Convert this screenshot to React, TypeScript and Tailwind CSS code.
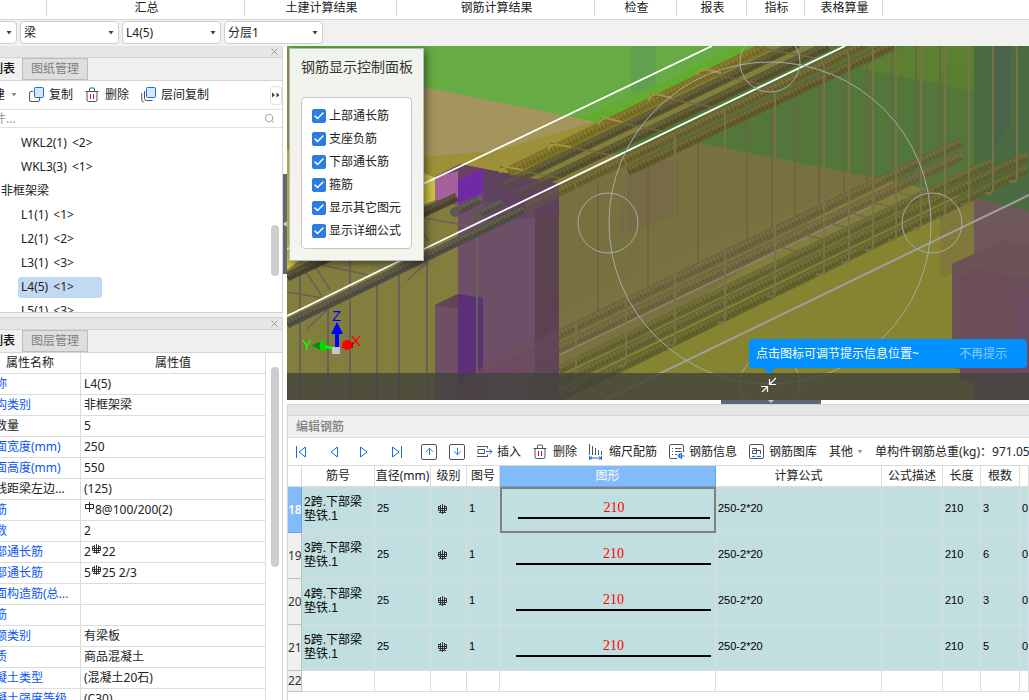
import React, { useState } from "react";
import { ArrowDown, ArrowUp, Check, Search, X } from "lucide-react";

const ribbon = [
  { label: "", width: "w-[47px]" },
  { label: "汇总", width: "w-[198px]" },
  { label: "土建计算结果", width: "w-[152px]" },
  { label: "钢筋计算结果", width: "w-[198px]" },
  { label: "检查", width: "w-[82px]" },
  { label: "报表", width: "w-[70px]" },
  { label: "指标", width: "w-[58px]" },
  { label: "表格算量", width: "w-[78px]" },
];

const members = [
  { name: "WKL2(1)", count: "<2>" },
  { name: "WKL3(3)", count: "<1>" },
  { name: "非框架梁", group: true },
  { name: "L1(1)", count: "<1>" },
  { name: "L2(1)", count: "<2>" },
  { name: "L3(1)", count: "<3>" },
  { name: "L4(5)", count: "<1>" },
  { name: "L5(1)", count: "<3>" },
];

const properties = [
  { name: "名称", value: "L4(5)", blue: true },
  { name: "结构类别", value: "非框架梁", blue: true },
  { name: "跨数量", value: "5" },
  { name: "截面宽度(mm)", value: "250", blue: true },
  { name: "截面高度(mm)", value: "550", blue: true },
  { name: "轴线距梁左边...", value: "(125)" },
  { name: "箍筋", value: <><Grade level={1} />8@100/200(2)</>, blue: true },
  { name: "肢数", value: "2", blue: true },
  { name: "上部通长筋", value: <>2<Grade level={3} />22</>, blue: true },
  { name: "下部通长筋", value: <>5<Grade level={3} />25 2/3</>, blue: true },
  { name: "侧面构造筋(总...", value: "", blue: true },
  { name: "拉筋", value: "", blue: true },
  { name: "定额类别", value: "有梁板", blue: true },
  { name: "材质", value: "商品混凝土", blue: true },
  { name: "混凝土类型", value: "(混凝土20石)", blue: true },
  { name: "混凝土强度等级", value: "(C30)", blue: true },
];

const rebars = [
  { id: 18, span: "2跨", count: 3 },
  { id: 19, span: "3跨", count: 6 },
  { id: 20, span: "4跨", count: 3 },
  { id: 21, span: "5跨", count: 5 },
];

const layers = ["上部通长筋", "支座负筋", "下部通长筋", "箍筋", "显示其它图元", "显示详细公式"];

// Steel grade mark: a box on a stem, grade 3 has extra bars
function Grade({ level }: { level: number }) {
  return (
    <svg width="11" height="11" viewBox="0 0 11 11" fill="none" stroke="#222" className="inline-block align-[1px]">
      {level === 1 ? (
        <path d="M1.500 2.500h8v4h-8zM5.500 0v10" />
      ) : (
        <path d="M3.500 2.500h-2v4h8v-4h-2M5.500 0v10M3.500 1v7M7.500 1v7M1 4.500h9M2 8.500h7" strokeWidth=".9" />
      )}
    </svg>
  );
}

const Caret = ({ className = "" }: { className?: string }) => (
  <svg width="6" height="4" viewBox="0 0 6 4" className={className}>
    <path d="M.5 0h5L3 3.500z" fill="currentColor" />
  </svg>
);

const CopyIcon = ({ triple = false }: { triple?: boolean }) => (
  <svg width="16" height="16" viewBox="0 0 16 16" fill="none">
    {triple ? (
      <path d="M3.500 4v7.500a2 2 0 0 0 2 2h6M.8 6v7a2 2 0 0 0 2 2" stroke="#4a5266" />
    ) : (
      <path d="M4 4.500H2A1.500 1.500 0 0 0 .5 6v7A1.500 1.500 0 0 0 2 14.500h7a1.500 1.500 0 0 0 1.500-1.500v-2" stroke="#4a5266" />
    )}
    <rect x="5.500" y=".5" width="9" height="10" rx="1" fill="#d6e6ff" stroke="#1a6be0" />
  </svg>
);

const TrashIcon = () => (
  <svg width="16" height="16" viewBox="0 0 16 16" fill="none">
    <path d="M.5 4.500h13M4.500 4V2A1 1 0 0 1 5.500 1h3a1 1 0 0 1 1 1v2M2 4.500V13a1.500 1.500 0 0 0 1.500 1.500h7A1.500 1.500 0 0 0 12 13V4.500" stroke="#4a5266" />
    <path d="M5.500 7v5M8.500 7v5" stroke="#e01020" />
  </svg>
);

const InsertIcon = () => (
  <svg width="16" height="16" viewBox="0 0 16 16" fill="none">
    <path d="M0 2.500h10.500v2M0 12.500h10.500v-2M1 5.500h6.500v4H1z" stroke="#4a5266" />
    <path d="M9 7.500h6M12.500 5l2.500 2.500-2.500 2.500" stroke="#1a6be0" />
  </svg>
);

const ScaleIcon = () => (
  <svg width="16" height="16" viewBox="0 0 16 16" fill="none">
    <path d="M.5 0v11M3.500 2v9M6.500 4v7M9.500 6v5M12.500 7v4" stroke="#4a5266" />
    <path d="M.5 12v4M12.500 12v4M1 14h11M3 12.500L1 14l2 1.500M10 12.500l2 1.500-2 1.500" stroke="#1a6be0" />
  </svg>
);

const InfoIcon = () => (
  <svg width="16" height="16" viewBox="0 0 16 16" fill="none">
    <path d="M8 14.500H2A1.500 1.500 0 0 1 .5 13V2A1.500 1.500 0 0 1 2 .5h11A1.500 1.500 0 0 1 14.500 2v6M3 4.500h1M6 4.500h6.500M3 7.500h1M6 7.500h6.500M3 10.500h1M6 10.500h2" stroke="#4a5266" />
    <path d="M9 12h6.500M12.500 9v6M9 12l2.500-2.500M9 12l2.500 2" stroke="#1a6be0" strokeWidth="1.200" />
  </svg>
);

const LibraryIcon = () => (
  <svg width="16" height="16" viewBox="0 0 16 16" fill="none">
    <rect x=".5" y=".5" width="14" height="14" rx="1.500" stroke="#4a5266" />
    <path d="M3 4.500h4.500v5H3.500v-3H7M8 6.500h3.500v3.500" stroke="#4a5266" />
    <path d="M3 12.500h3.500M8 12.500h4" stroke="#1a6be0" />
  </svg>
);

const StepIcon = ({ back = false, end = false }) => (
  <svg width="16" height="16" viewBox="0 0 16 16" fill="none" stroke="#1a6be0">
    <path d={back ? "M12.500 3v10L6 8z" : "M3.500 3v10L10 8z"} />
    {end && <path d={back ? "M3.500 2v12" : "M12.500 2v12"} />}
  </svg>
);

function Combo({ value }: { value: string }) {
  return (
    <div className="relative w-[99px] shrink-0">
      <select
        aria-label={value}
        className="h-[23px] w-full appearance-none rounded border border-[#cfcfcf] bg-white pl-[3px] text-xs text-[#222]">
        <option>{value}</option>
      </select>
      <Caret className="pointer-events-none absolute top-[10px] right-[5px] text-[#444]" />
    </div>
  );
}

function PanelTop({ active, other }: { active: string; other: string }) {
  return (
    <>
      <div className="flex h-3 items-center justify-end border-b border-[#d4d4d4] bg-[#e6e6e6] pr-0.5">
        <button aria-label="关闭">
          <X size={11} className="text-[#999]" strokeWidth={2} />
        </button>
      </div>
      <div className="flex h-[23px] border-b border-[#d4d4d4] bg-[#f0f0f0] pl-1.5 text-xs">
        <button className="w-16 pl-0.5 font-medium text-[#111]">{active}</button>
        <button className="w-[66px] border border-[#bcbcc0] bg-[#dedede] text-[#808080]">{other}</button>
      </div>
    </>
  );
}

function ToolButton({ icon, label }: { icon: React.ReactNode; label: string }) {
  return (
    <button className="flex shrink-0 items-center gap-1">
      {icon}
      {label}
    </button>
  );
}

function MemberPanel() {
  const [selected, setSelected] = useState("L4(5)");

  return (
    <section className="border-r border-b border-[#d4d4d4] bg-white">
      <PanelTop active="构件列表" other="图纸管理" />
      <div className="flex h-[29px] items-center gap-3 border-b border-[#e0e0e0] pl-[29px] text-xs text-[#222]">
        <button className="flex shrink-0 items-center gap-1.5">
          新建
          <Caret className="text-[#888]" />
        </button>
        <ToolButton icon={<CopyIcon />} label="复制" />
        <ToolButton icon={<TrashIcon />} label="删除" />
        <ToolButton icon={<CopyIcon triple />} label="层间复制" />
        <button aria-label="更多" className="ml-auto flex h-[19px] w-3 items-center justify-center rounded border border-[#dedede]">
          <svg width="8" height="6" viewBox="0 0 8 6">
            <path d="M0 .5v5l3-2.500zM4.500 .5v5l3-2.500z" fill="#444" />
          </svg>
        </button>
      </div>
      <label className="flex h-[18px] items-center border-b border-[#e0e0e0] pr-[7px] pl-1.5">
        <input aria-label="搜索构件" placeholder="搜索构件..." className="min-w-0 flex-1 text-xs outline-none placeholder:text-[#999]" />
        <Search size={11} className="text-[#999]" />
      </label>
      <div className="relative h-[184px] overflow-hidden pt-[3px] text-xs text-[#222]">
        {members.map((item) =>
          item.group ? (
            <div key={item.name} className="flex h-6 items-center pl-[49px]">
              {item.name}
            </div>
          ) : (
            <div key={item.name} className="flex h-6 items-center pl-[66px]">
              <button
                onClick={() => setSelected(item.name)}
                className={`h-[21px] w-[84px] rounded-[3px] pl-[3px] text-left leading-5 ${
                  item.name === selected ? "bg-[#c2d9f2]" : ""
                }`}>
                {item.name} <span className="ml-0.5">{item.count}</span>
              </button>
            </div>
          )
        )}
        <div className="absolute top-[97px] right-[3px] h-[51px] w-2 rounded-full bg-[#cdcdcd]" />
      </div>
    </section>
  );
}

function PropertyPanel() {
  return (
    <section className="mt-1 flex min-h-0 flex-1 flex-col border-t border-r border-[#d4d4d4] bg-white">
      <PanelTop active="属性列表" other="图层管理" />
      <div className="relative min-h-0 flex-1 overflow-hidden pl-7">
        <table className="w-[286px] table-fixed border-separate border-spacing-0 text-xs text-[#222]">
          <thead>
            <tr className="h-[21px]">
              <th className="w-[101px] border-r border-b border-[#dcdcdc] p-0 font-normal">属性名称</th>
              <th className="border-r border-b border-[#dcdcdc] p-0 font-normal">属性值</th>
            </tr>
          </thead>
          <tbody>
            {properties.map((p) => (
              <tr key={p.name} className="h-[21px]">
                <td
                  className={`truncate border-r border-b border-[#dcdcdc] p-0 pl-[3px] ${
                    p.blue ? "text-[#0d55f5]" : ""
                  }`}>
                  {p.name}
                </td>
                <td className="border-r border-b border-[#dcdcdc] p-0 pl-[3px] whitespace-nowrap">{p.value}</td>
              </tr>
            ))}
          </tbody>
        </table>
        <div className="absolute top-[14px] right-[3px] h-[200px] w-2 rounded-full bg-[#cdcdcd]" />
      </div>
    </section>
  );
}

// [x1, y1, x2, y2, colour, width]
const upperBars: [number, number, number, number, string, number][] = [
  [508, 172, 767, 46, "#7d7024", 10],
  [500, 187, 798, 44, "#57522f", 9],
  [515, 195, 828, 46, "#55502d", 9],
  [525, 208, 866, 44, "#69622f", 10],
  [628, 171, 895, 44, "#625c2c", 10],
];

const lowerBars: [number, number, number, number, string, number][] = [
  [485, 370, 962, 142, "#6a5f3b", 10],
  [515, 370, 962, 156, "#6b603c", 10],
  [559, 370, 994, 161, "#62622f", 9],
  [559, 383, 1027, 156, "#62612e", 10],
  [559, 397, 1027, 169, "#5f5f2c", 10],
];

const frontBars: [number, number, number, number, string, number][] = [
  [287, 277, 457, 197, "#4a4431", 9],
  [287, 324, 523, 210, "#504d44", 9],
  [455, 212, 480, 200, "#524d4b", 9],
  [477, 215, 502, 203, "#524d4b", 9],
];

// [x, top, bottom]
const frontStirrups = [
  [576, 184, 390], [626, 160, 366], [675, 135, 345], [725, 110, 322], [775, 92, 296],
  [824, 64, 274], [849, 54, 262], [873, 46, 250], [896, 46, 240], [921, 46, 228],
  [945, 46, 217], [969, 46, 204], [993, 46, 193], [1017, 46, 181],
];
const backStirrups = [
  [598, 180, 312], [648, 160, 290], [698, 143, 263], [747, 118, 240], [772, 108, 228],
  [795, 97, 216], [819, 86, 205], [844, 72, 192], [867, 60, 180], [892, 46, 169],
  [916, 46, 157], [940, 46, 147],
];
const nearStirrups = [
  [300, 273, 400], [328, 302, 400], [350, 261, 400], [377, 278, 400], [399, 272, 400],
  [427, 246, 400], [477, 228, 400],
];

function Bars({ bars, opacity = 1 }: { bars: typeof upperBars; opacity?: number }) {
  return (
    <g opacity={opacity}>
      {bars.map(([x1, y1, x2, y2, color, width]) => (
        <g key={`${x1}-${y1}`}>
          <path d={`M${x1} ${y1}L${x2} ${y2}`} stroke={color} strokeWidth={width} />
          <path d={`M${x1} ${y1 - 2}L${x2} ${y2 - 2}`} stroke="#c8c080" strokeOpacity=".15" strokeWidth="4" />
          <path d={`M${x1} ${y1}L${x2} ${y2}`} stroke="#1c1a08" strokeOpacity=".2" strokeWidth={width - 4} strokeDasharray="1.200 2.800" />
        </g>
      ))}
    </g>
  );
}

function Scene() {
  return (
    <svg viewBox="287 46 742 354" preserveAspectRatio="xMinYMin slice" className="absolute inset-0 h-full w-full" fill="none">
      <rect x="287" y="46" width="742" height="354" fill="#817e3e" />
      <path d="M287 46H768L590 130L424 87L287 60z" fill="#66ab44" />
      <path d="M631 46h25v40l-25 14z" fill="#61a04f" />
      <path d="M550 132L668 80L732 46H770L590 132z" fill="#62ad2f" />
      <path d="M287 58L424 87L596 122L530 153L424 157L287 162z" fill="#a4955e" />
      <path d="M287 160L424 157L500 150L600 120L520 176L436 178L424 173L287 170z" fill="#9c9139" />
      <path d="M287 150H300V260L287 270zM424 173L436 178V200L420 206z" fill="#cbc241" />

      {/* slabs behind the beam */}
      <path d="M600 150L815 46H1029V212L974 199L875 178L697 143L640 160z" fill="#53773a" />
      <path d="M860 68L905 46H974V91z" fill="#5c8030" />
      <path d="M940 68l16-4 18 5v22l-34-7z" fill="#587f2e" />
      <path d="M974 46H1029V212L974 199z" fill="#4b6c42" />
      <path d="M992 46h18v80l-18 24z" fill="#4b6449" />
      <path d="M559 184L640 152L698 143L875 178L657 284L559 330z" fill="#77713f" />
      <path d="M626 170l30-10h23v54l-60 22z" fill="#776a46" />
      <path d="M559 400L640 350L940 205L974 199L1029 212V400z" fill="#858430" />
      <path d="M559 310L720 235L875 178L640 340L559 370z" fill="#7a7240" />

      {/* far right columns */}
      <path d="M940 210L974 199V264L940 279z" fill="#81793a" />
      <path d="M974 199L1029 211V400H974z" fill="#70585a" />
      <path d="M952 264L1003 240L1029 245V376L952 368z" fill="#6d5357" />
      <path d="M960 276L975 269L1029 279V400L960 379z" fill="#6a4d59" />
      <path d="M1014 296l15-2v80l-15-3z" fill="#6d4b60" />

      {/* column at the support */}
      <path d="M435 177L460 164L559 184V400H458V205L435 201z" fill="#6e4f68" />
      <path d="M435 177L460 164L559 184V200L458 178z" fill="#6b4162" />
      <path d="M435 177L458 171V203L435 200z" fill="#a5619a" />
      <path d="M458 180L483 168V193L458 204z" fill="#7229a6" />
      <path d="M483 169L559 184V215L483 200z" fill="#5f4160" />
      <path d="M535 200L559 184V400H535z" fill="#5c4350" />
      <path d="M435 305L458 294V400H435z" fill="#704f64" />
      <path d="M435 305L458 294V309z" fill="#5f4652" />
      <path d="M458 294L483 298V400H458z" fill="#5c3079" />

      <g stroke="#6c6242" strokeWidth="2" strokeOpacity=".75">
        {backStirrups.map(([x, top, bottom]) => (
          <path key={x} d={`M${x} ${top}V${bottom}`} />
        ))}
      </g>
      <Bars bars={lowerBars.slice(0, 2)} opacity={0.8} />
      <path d="M559 355L870 207" stroke="#8b8278" strokeWidth="1.500" />
      <Bars bars={lowerBars.slice(2)} opacity={0.9} />
      <path d="M483 366L559 329V400H440z" fill="#6c4868" fillOpacity=".75" />
      <path d="M535 300L559 290V400H535z" fill="#5c4350" fillOpacity=".6" />
      <Bars bars={upperBars} />
      <path d="M483 169L559 184V215L483 222z" fill="#5f4160" fillOpacity=".6" />
      <g stroke="#7a7247" strokeWidth="2">
        {frontStirrups.map(([x, top, bottom]) => (
          <path key={x} d={`M${x - 3} ${top - 2}Q${x} ${top} ${x} ${top + 5}V${bottom - 4}Q${x} ${bottom + 2} ${x - 8} ${bottom}`} />
        ))}
      </g>
      <g stroke="#75683f" strokeWidth="1.500">
        <path d="M500 167l60 11M550 143l60 12M600 119l66 13M650 95l66 13M700 72l66 13M755 47l60 11" />
        <path d="M776 246l24 6M801 234l24 6M825 222l24 6M850 213l24 6M874 203l24 5M899 193l24 5M923 180l24 5M947 170l20 4" />
      </g>
      <g stroke="#a79438" strokeWidth="2">
        <path d="M500 173q4-8 11-5l12 2M548 150q4-8 11-5l12 2M598 125q4-9 12-6l12 3M648 101q4-9 12-6l12 3M697 75q4-8 12-5l12 3" />
      </g>

      <g stroke="#6b6058" strokeWidth="2">
        {nearStirrups.map(([x, top, bottom]) => (
          <path key={x} d={`M${x} ${top}V${bottom}`} />
        ))}
        <path d="M287 292l36 6M302 266l20 30M313 263l17 27M312 263l56 12M307 329l21-20M407 281l19-18M424 218l45 8M424 234l5 8" strokeWidth="1.500" />
      </g>
      <Bars bars={frontBars} />
      <circle cx="455" cy="212" r="5" fill="#5c5752" />
      <circle cx="477" cy="216" r="5" fill="#5c5752" />

      <path d="M287 249L712 46" stroke="#fff" strokeWidth="1.800" />
      <path d="M287 316L424 249L845 46" stroke="#fff" strokeWidth="1.800" />
      <path d="M605 400L1029 195" stroke="#a39da0" strokeWidth="2" />

      {/* orbit guide */}
      <g stroke="#a9a9a9">
        <circle cx="770" cy="223" r="161" />
        <circle cx="770" cy="62" r="30" />
        <circle cx="608" cy="223" r="30" />
        <circle cx="932" cy="223" r="30" />
        <circle cx="770" cy="384" r="30" />
      </g>

      {/* axis tripod */}
      <path d="M337 348V331" stroke="#00f" strokeWidth="4" />
      <path d="M331 334L337 322L343 334z" fill="#00f" />
      <path d="M336 349L322 346" stroke="#0f0" strokeWidth="3" />
      <path d="M312 345L325 340V352z" fill="#00d800" />
      <path d="M312 345L320 342V350z" fill="#0a8a0a" />
      <path d="M341 348l12-6v6z" fill="#8a0808" />
      <circle cx="347" cy="345" r="5" fill="#f00" />
      <path d="M332 347h8v7h-8z" fill="#c8c8c8" />
      <g fontFamily="Liberation Sans" fontSize="15">
        <text x="332" y="321" fill="#00f">Z</text>
        <text x="302" y="350" fill="#0f0">Y</text>
        <text x="351" y="346" fill="#f00">X</text>
      </g>
    </svg>
  );
}

function LayerPanel() {
  const [hidden, setHidden] = useState<string[]>([]);

  const toggle = (name: string) => {
    setHidden((prev) => (prev.includes(name) ? prev.filter((n) => n !== name) : [...prev, name]));
  };

  return (
    <div className="absolute top-0.5 left-0.5 w-[135px] border border-[#b9b9b9] bg-linear-to-b from-[#f0f5ec] via-[#f3f1ed] to-[#f5f5ef] px-[11px] pb-[11px] shadow-[2px_2px_8px_rgba(0,0,0,0.5)]">
      <h2 className="pt-2 pb-5 text-sm leading-5 whitespace-nowrap text-[#333]">钢筋显示控制面板</h2>
      <div className="rounded border border-[#c6c6c6] bg-white px-2.5 py-1.5">
        {layers.map((name) => (
          <label key={name} className="flex h-[23px] items-center gap-[3px] text-xs whitespace-nowrap text-[#222]">
            <span className="grid shrink-0 place-items-center">
              <input
                type="checkbox"
                checked={!hidden.includes(name)}
                onChange={() => toggle(name)}
                className="peer col-start-1 row-start-1 size-3.5 appearance-none rounded-[2px] border border-[#2b7de1] bg-white checked:bg-[#2b7de1]"
              />
              <Check size={12} strokeWidth={3} className="pointer-events-none invisible col-start-1 row-start-1 text-white peer-checked:visible" />
            </span>
            {name}
          </label>
        ))}
      </div>
    </div>
  );
}

function Viewport() {
  return (
    <div className="relative min-h-0 flex-1 overflow-hidden">
      <Scene />
      <div className="absolute inset-x-0 bottom-0 h-[27px] bg-[#42423c]/80" />
      <LayerPanel />
      <button aria-label="收起" className="absolute bottom-[7px] left-[474px]">
        <svg width="16" height="16" viewBox="0 0 16 16" fill="none" stroke="#fff" strokeWidth="1.200">
          <path d="M15 1L8.500 7.500M8.500 2v5.500H15M0 9.500h6.500V15M6.500 9.500L1 15" />
        </svg>
      </button>
      <div className="absolute right-0.5 bottom-8 flex h-[29px] w-[278px] items-center rounded bg-[#0090ff] pr-5 pl-[7px] text-xs text-white">
        <span>点击图标可调节提示信息位置~</span>
        <button className="ml-auto text-[#8ccbff]">不再提示</button>
        <svg width="12" height="6" viewBox="0 0 12 6" className="absolute top-full left-3.5">
          <path d="M0 0h12L6 6z" fill="#0090ff" />
        </svg>
      </div>
    </div>
  );
}

const columns = [
  { label: "", width: "w-[14px]" },
  { label: "筋号", width: "w-[73px]" },
  { label: "直径(mm)", width: "w-[56px]" },
  { label: "级别", width: "w-[36px]" },
  { label: "图号", width: "w-[33px]" },
  { label: "图形", width: "w-[216px]" },
  { label: "计算公式", width: "w-[166px]" },
  { label: "公式描述", width: "w-[61px]" },
  { label: "长度", width: "w-[38px]" },
  { label: "根数", width: "w-[39px]" },
  { label: "", width: "" },
];

function RebarTable() {
  const [current, setCurrent] = useState(18);
  const cell = "border-r border-b border-[#dcdcdc] p-0 pl-0.5 pb-0.5 text-[11px]";

  return (
    <table className="w-full table-fixed border-separate border-spacing-0 text-xs text-[#222]">
      <thead>
        <tr className="h-[21px]">
          {columns.map((c, i) => (
            <th
              key={i}
              className={`${c.width} overflow-hidden border-r border-b p-0 font-normal whitespace-nowrap ${
                c.label === "图形" ? "border-[#66a5ea] bg-[#82bafa] text-white" : "border-[#dcdcdc]"
              }`}>
              {c.label}
            </th>
          ))}
        </tr>
      </thead>
      <tbody>
        {rebars.map((r) => (
          <tr key={r.id} onClick={() => setCurrent(r.id)} className="h-[46px] bg-[#c1dee0] font-['Liberation_Sans','Noto_Sans_CJK_SC',sans-serif] text-black">
            <th
              className={`overflow-hidden border-r border-b p-0 font-['Noto_Sans',sans-serif] text-xs ${
                r.id === current
                  ? "border-[#66a5ea] bg-[#82bafa] font-semibold text-white"
                  : "border-[#c0c0c0] bg-[#f0f0f0] font-normal text-[#333]"
              }`}>
              {r.id}
            </th>
            <td className="border-r border-b border-[#dcdcdc] p-0 pb-0.5 pl-0.5 text-xs leading-[14px]">
              {r.span}.下部梁
              <br />
              垫铁.1
            </td>
            <td className={cell}>25</td>
            <td className="border-r border-b border-[#dcdcdc] p-0 pt-1 pr-4 pl-1 text-center">
              <Grade level={3} />
            </td>
            <td className={cell}>1</td>
            <td
              className={`p-0 align-top ${
                r.id === current ? "border-2 border-[#808080]" : "border-r border-b border-[#dcdcdc] pt-0.5"
              }`}>
              <div className="mr-1 ml-4 border-b-2 border-black pt-2.5 text-center font-['Liberation_Serif',serif] text-sm leading-[18px] text-[#f00]">
                210
              </div>
            </td>
            <td className={cell}>250-2*20</td>
            <td className={cell}></td>
            <td className={cell}>210</td>
            <td className={cell}>{r.count}</td>
            <td className={`${cell} overflow-hidden`}>0</td>
          </tr>
        ))}
        <tr className="h-[21px]">
          <th className="overflow-hidden border-r border-b border-[#c0c0c0] bg-[#f0f0f0] p-0 font-normal text-[#333]">22</th>
          {columns.slice(1).map((_, i) => (
            <td key={i} className="border-r border-b border-[#dcdcdc] p-0"></td>
          ))}
        </tr>
      </tbody>
    </table>
  );
}

function RebarEditor() {
  return (
    <section className="shrink-0 overflow-hidden border-t border-l border-[#d4d4d4] bg-white pb-2">
      <div className="h-[11px] border-b border-[#d4d4d4] bg-[#e6e6e6]" />
      <h2 className="h-[22px] border-b border-[#dcdcdc] bg-[#f0f0f0] pl-2 text-xs leading-[21px] font-medium text-[#808080]">编辑钢筋</h2>
      <div className="flex h-7 items-center gap-3 border-b border-[#dcdcdc] pl-[5px] text-xs whitespace-nowrap text-[#222]">
        <div className="mr-1 flex gap-4">
          <button aria-label="首行"><StepIcon back end /></button>
          <button aria-label="上一行"><StepIcon back /></button>
          <button aria-label="下一行"><StepIcon /></button>
          <button aria-label="末行"><StepIcon end /></button>
        </div>
        <button aria-label="上移" className="grid size-4 shrink-0 place-items-center rounded-[2px] border border-[#4a5266] text-[#1a6be0]">
          <ArrowUp size={11} />
        </button>
        <button aria-label="下移" className="grid size-4 shrink-0 place-items-center rounded-[2px] border border-[#4a5266] text-[#1a6be0]">
          <ArrowDown size={11} />
        </button>
        <ToolButton icon={<InsertIcon />} label="插入" />
        <ToolButton icon={<TrashIcon />} label="删除" />
        <ToolButton icon={<ScaleIcon />} label="缩尺配筋" />
        <ToolButton icon={<InfoIcon />} label="钢筋信息" />
        <ToolButton icon={<LibraryIcon />} label="钢筋图库" />
        <button className="flex items-center gap-1">
          其他
          <Caret className="text-[#999]" />
        </button>
        <span>单构件钢筋总重(kg)：971.05</span>
      </div>
      <RebarTable />
    </section>
  );
}

export default function App() {
  return (
    <div className="flex h-screen flex-col overflow-hidden bg-[#f1f1f1] font-['Noto_Sans','Noto_Sans_CJK_SC',sans-serif] text-xs">
      <nav className="flex h-5 shrink-0 border-b border-[#d6d6d6] bg-white">
        {ribbon.map((item) => (
          <button key={item.label} className={`${item.width} h-4 shrink-0 border-r border-[#d6d6d6] pl-0.5 leading-4 text-[#222]`}>
            {item.label}
          </button>
        ))}
      </nav>
      <div className="flex h-[26px] shrink-0 gap-[3px] pt-px">
        <div className="flex w-[17px] justify-end overflow-hidden">
          <Combo value="首层" />
        </div>
        <Combo value="梁" />
        <Combo value="L4(5)" />
        <Combo value="分层1" />
      </div>
      <div className="flex min-h-0 flex-1">
        <aside className="flex w-[283px] shrink-0 justify-end overflow-hidden">
          <div className="flex w-[331px] shrink-0 flex-col">
            <MemberPanel />
            <PropertyPanel />
          </div>
        </aside>
        <div className="w-1 shrink-0 bg-white pt-32">
          <button aria-label="折叠左侧面板" className="flex h-[100px] w-1 items-center bg-[#5d6878]">
            <svg width="4" height="6" viewBox="0 0 4 6">
              <path d="M4 0v6L0 3z" fill="#c4c8ce" />
            </svg>
          </button>
        </div>
        <main className="flex min-w-0 flex-1 flex-col">
          <Viewport />
          <div className="flex h-1 shrink-0 justify-center bg-white pl-[226px]">
            <button aria-label="折叠底部面板" className="flex h-1 w-[100px] justify-center bg-[#5d6878]">
              <svg width="6" height="3" viewBox="0 0 6 3">
                <path d="M0 0h6L3 3z" fill="#c4c8ce" />
              </svg>
            </button>
          </div>
          <RebarEditor />
        </main>
      </div>
    </div>
  );
}
